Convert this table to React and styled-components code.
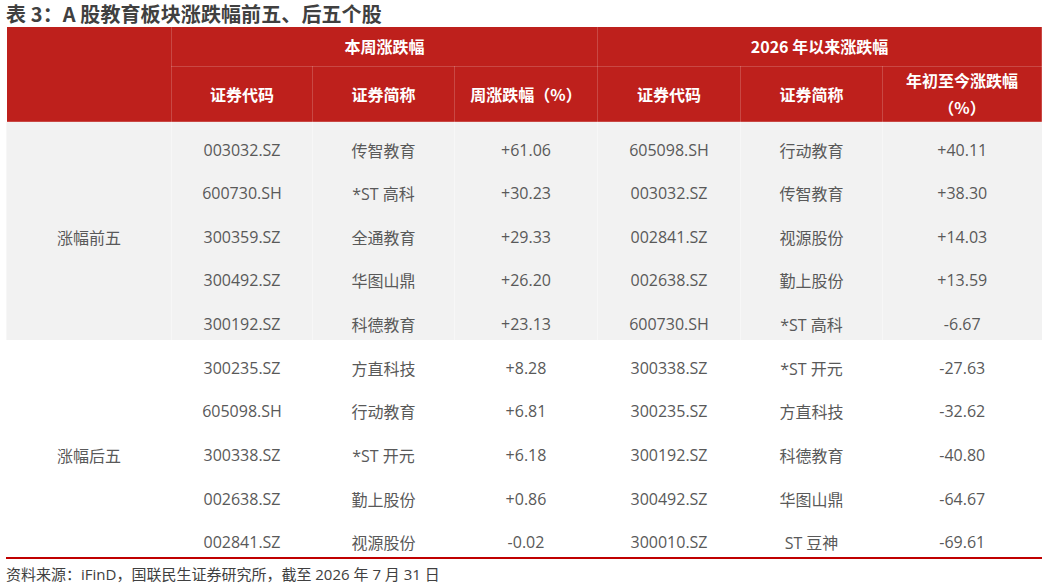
import React from 'react';
import styled, { createGlobalStyle } from 'styled-components';

const GlobalStyle = createGlobalStyle`
body {
    margin: 0;
    background: #fff;
    font-family: "Open Sans", "Noto Sans CJK SC", sans-serif;
}
`;

const Page = styled.div`
width: 1046px;
height: 587px;
padding-left: 6px;
box-sizing: border-box;
overflow: hidden;
`;

const Title = styled.h1`
margin: 0;
padding-top: 2px;
height: 24px;
line-height: 24px;
font-size: 20px;
font-weight: 700;
color: #404040;
font-family: "Noto Sans CJK SC", sans-serif;
letter-spacing: 0.1px;
`;

const Table = styled.table`
width: 1035px;
border-collapse: collapse;
table-layout: fixed;
font-size: 16px;
border-bottom: 2px solid #c00000;
`;

const HeadCell = styled.th`
background-color: #be201c;
color: #fff;
font-weight: 700;
font-family: "Noto Sans CJK SC", sans-serif;
text-align: center;
vertical-align: middle;
border: 1px solid rgba(255, 255, 255, 0.18);
padding: 0 4px;
line-height: 27px;
`;

const GroupRow = styled.tr`
height: 40px;
`;

const ColRow = styled.tr`
height: 54px;
`;

const BodyRow = styled.tr`
height: 43.7px;
background-color: ${props => (props.$shaded ? '#f2f2f2' : '#fff')};
`;

const Cell = styled.td`
padding: 12px 4px 0;
text-align: center;
vertical-align: middle;
color: #595959;
white-space: nowrap;
border-left: 1px solid ${props => (props.$shaded ? '#f7f7f7' : '#fff')};
`;

const Source = styled.div`
margin-top: 5px;
font-size: 15px;
line-height: 20px;
color: #404040;
`;

const top = [
    ['003032.SZ', '传智教育', '+61.06', '605098.SH', '行动教育', '+40.11'],
    ['600730.SH', '*ST 高科', '+30.23', '003032.SZ', '传智教育', '+38.30'],
    ['300359.SZ', '全通教育', '+29.33', '002841.SZ', '视源股份', '+14.03'],
    ['300492.SZ', '华图山鼎', '+26.20', '002638.SZ', '勤上股份', '+13.59'],
    ['300192.SZ', '科德教育', '+23.13', '600730.SH', '*ST 高科', '-6.67'],
];

const bottom = [
    ['300235.SZ', '方直科技', '+8.28', '300338.SZ', '*ST 开元', '-27.63'],
    ['605098.SH', '行动教育', '+6.81', '300235.SZ', '方直科技', '-32.62'],
    ['300338.SZ', '*ST 开元', '+6.18', '300192.SZ', '科德教育', '-40.80'],
    ['002638.SZ', '勤上股份', '+0.86', '300492.SZ', '华图山鼎', '-64.67'],
    ['002841.SZ', '视源股份', '-0.02', '300010.SZ', 'ST 豆神', '-69.61'],
];

const Section = ({ label, rows, shaded }) => (
    <>
        {rows.map((row, index) => (
            <BodyRow key={label + index} $shaded={shaded}>
                {index === 0 && (
                    <Cell rowSpan={5} $shaded={shaded}>{label}</Cell>
                )}
                {row.map((value, i) => (
                    <Cell key={i} $shaded={shaded}>{value}</Cell>
                ))}
            </BodyRow>
        ))}
    </>
);

export default function App() {
    return (
        <Page>
            <GlobalStyle />
            <Title>表 3：A 股教育板块涨跌幅前五、后五个股</Title>
            <Table>
                <colgroup>
                    <col style={{ width: '165px' }} />
                    <col style={{ width: '141px' }} />
                    <col style={{ width: '142px' }} />
                    <col style={{ width: '143px' }} />
                    <col style={{ width: '143px' }} />
                    <col style={{ width: '142px' }} />
                    <col style={{ width: '159px' }} />
                </colgroup>
                <thead>
                    <GroupRow>
                        <HeadCell rowSpan={2}></HeadCell>
                        <HeadCell colSpan={3}>本周涨跌幅</HeadCell>
                        <HeadCell colSpan={3}>2026 年以来涨跌幅</HeadCell>
                    </GroupRow>
                    <ColRow>
                        <HeadCell>证券代码</HeadCell>
                        <HeadCell>证券简称</HeadCell>
                        <HeadCell>周涨跌幅（%）</HeadCell>
                        <HeadCell>证券代码</HeadCell>
                        <HeadCell>证券简称</HeadCell>
                        <HeadCell>年初至今涨跌幅<br />（%）</HeadCell>
                    </ColRow>
                </thead>
                <tbody>
                    <Section label="涨幅前五" rows={top} shaded />
                    <Section label="涨幅后五" rows={bottom} />
                </tbody>
            </Table>
            <Source>资料来源：iFinD，国联民生证券研究所，截至 2026 年 7 月 31 日</Source>
        </Page>
    );
}
